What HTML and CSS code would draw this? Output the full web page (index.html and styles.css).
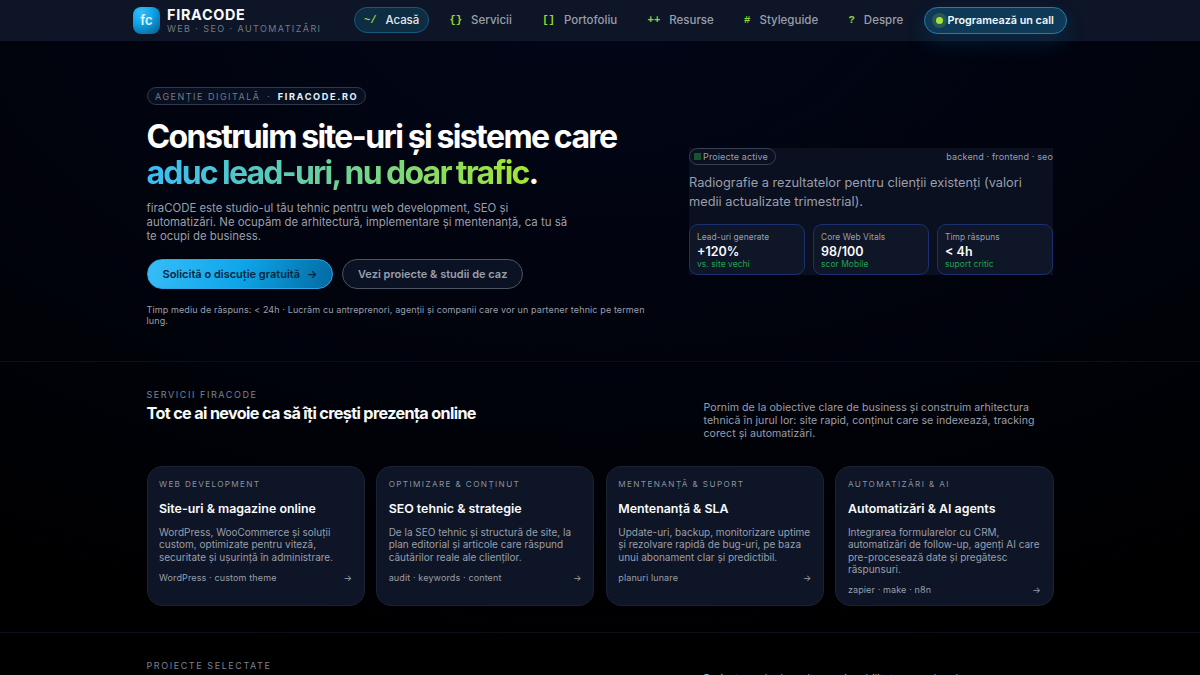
FILE: index.html
```html
<!DOCTYPE html>
<html lang="ro">
<head>
<meta charset="utf-8">
<title>firaCODE</title>
<link rel="stylesheet" href="styles.css">
</head>
<body>
<header class="topbar">
  <a class="brand">
    <span class="logo">fc</span>
    <span class="brand-text"><b class="brand-name">FIRACODE</b><span class="brand-sub">WEB · SEO · AUTOMATIZĂRI</span></span>
  </a>
  <nav class="nav">
    <a class="nav-item active"><i>~/</i><span>Acasă</span></a>
    <a class="nav-item"><i>{}</i><span>Servicii</span></a>
    <a class="nav-item"><i>[]</i><span>Portofoliu</span></a>
    <a class="nav-item"><i>++</i><span>Resurse</span></a>
    <a class="nav-item"><i>#</i><span>Styleguide</span></a>
    <a class="nav-item"><i>?</i><span>Despre</span></a>
  </nav>
  <a class="call"><span class="dot"></span><span>Programează un call</span></a>
</header>
<main>
<section class="hero">
  <div class="hero-copy">
    <div class="pill"><span>AGENȚIE DIGITALĂ</span><span class="sep">·</span><b>FIRACODE.RO</b></div>
    <h1>Construim site-uri și sisteme care<br><span class="grad">aduc lead-uri, nu doar trafic</span>.</h1>
    <p class="lead">firaCODE este studio-ul tău tehnic pentru web development, SEO și<br>automatizări. Ne ocupăm de arhitectură, implementare și mentenanță, ca tu să<br>te ocupi de business.</p>
    <div class="actions">
      <a class="btn primary"><span>Solicită o discuție gratuită</span><span>→</span></a>
      <a class="btn ghost">Vezi proiecte &amp; studii de caz</a>
    </div>
    <p class="note">Timp mediu de răspuns: &lt; 24h · Lucrăm cu antreprenori, agenții și companii care vor un partener tehnic pe termen<br>lung.</p>
  </div>
  <div class="panel">
    <div class="panel-head"><span class="badge"><i></i><span>Proiecte active</span></span><span>backend · frontend · seo</span></div>
    <p class="panel-text">Radiografie a rezultatelor pentru clienții existenți (valori<br>medii actualizate trimestrial).</p>
    <div class="stats">
      <div class="stat"><span class="k">Lead-uri generate</span><b>+120%</b><em>vs. site vechi</em></div>
      <div class="stat"><span class="k">Core Web Vitals</span><b>98/100</b><em>scor Mobile</em></div>
      <div class="stat"><span class="k">Timp răspuns</span><b>&lt; 4h</b><em>suport critic</em></div>
    </div>
  </div>
</section>
<section class="services">
  <div class="sec-head">
    <div><div class="eyebrow">SERVICII FIRACODE</div><h2>Tot ce ai nevoie ca să îți crești prezența online</h2></div>
    <p class="sec-text">Pornim de la obiective clare de business și construim arhitectura<br>tehnică în jurul lor: site rapid, conținut care se indexează, tracking<br>corect și automatizări.</p>
  </div>
  <div class="cards">
    <article class="card"><div class="tag tight">WEB DEVELOPMENT</div><h3>Site-uri &amp; magazine online</h3><p>WordPress, WooCommerce și soluții<br>custom, optimizate pentru viteză,<br>securitate și ușurință în administrare.</p><div class="foot"><span>WordPress · custom theme</span><span>→</span></div></article>
    <article class="card"><div class="tag">OPTIMIZARE &amp; CONȚINUT</div><h3>SEO tehnic &amp; strategie</h3><p>De la SEO tehnic și structură de site, la<br>plan editorial și articole care răspund<br>căutărilor reale ale clienților.</p><div class="foot"><span>audit · keywords · content</span><span>→</span></div></article>
    <article class="card"><div class="tag">MENTENANȚĂ &amp; SUPORT</div><h3>Mentenanță &amp; SLA</h3><p>Update-uri, backup, monitorizare uptime<br>și rezolvare rapidă de bug-uri, pe baza<br>unui abonament clar și predictibil.</p><div class="foot"><span>planuri lunare</span><span>→</span></div></article>
    <article class="card"><div class="tag">AUTOMATIZĂRI &amp; AI</div><h3>Automatizări &amp; AI agents</h3><p>Integrarea formularelor cu CRM,<br>automatizări de follow-up, agenți AI care<br>pre-procesează date și pregătesc<br>răspunsuri.</p><div class="foot"><span>zapier · make · n8n</span><span>→</span></div></article>
  </div>
</section>
<section class="projects">
  <div class="sec-head"><div class="eyebrow">PROIECTE SELECTATE</div><p class="sec-text">Proiecte unde dezvoltarea și mobilitatea au rol real.</p></div>
</section>
</main>
</body>
</html>
```
FILE: styles.css
```css
* { box-sizing: border-box; }
html, body { height: 100%; }
body {
  margin: 0;
  overflow: hidden;
  font-family: Inter, "Liberation Sans", sans-serif;
  color: #9a9fab;
  white-space: nowrap;
  background: radial-gradient(ellipse 100% 100% at 50% 0, #020617 0, #01030d 50%, #000 100%);
}
p, h1, h2, h3 { margin: 0; }
i, em { font-style: normal; }
.topbar {
  height: 41px;
  padding: 0 133px;
  display: flex;
  align-items: flex-start;
  background: #0d1527;
  border-bottom: 1px solid #0f182a;
}
.brand { display: flex; gap: 7px; padding-top: 6.5px; width: 221px; }
.logo {
  width: 27px; height: 27px;
  border-radius: 8px;
  background: radial-gradient(circle at 30% 20%, #38bdf8, #0ea5e9 40%, #075985 100%);
  color: #e3f4ff;
  font-size: 13px; font-weight: 600; line-height: 27px;
  text-align: center;
}
.brand-text { display: flex; flex-direction: column; }
.brand-name { font-size: 14.4px; line-height: 15.5px; letter-spacing: .7px; font-weight: 700; color: #f9fafb; }
.brand-sub { font-size: 9px; line-height: 13px; letter-spacing: 1.41px; color: #747a87; }
.nav { display: flex; padding-top: 6.5px; gap: 10.3px; }
.nav-item {
  height: 26.5px;
  padding: 0 9px;
  display: flex;
  align-items: center;
  gap: 9px;
  border: 1px solid transparent;
  border-radius: 14px;
  font-size: 11.5px;
  font-weight: 500;
}
.nav-item i { font: bold 10.6px "Liberation Mono", monospace; color: #93d635; }
.active { background: #0e2c42; border-color: #155a7c; color: #e5e7eb; letter-spacing: -.1px; }
.call {
  margin: 6.5px 0 0 auto;
  width: 143px; height: 27px;
  display: flex; align-items: center;
  gap: 4.5px;
  padding-left: 11px;
  border: 1px solid #1f7fae;
  border-radius: 14px;
  background: #0f3a57;
  box-shadow: 0 9px 22px rgba(14,165,233,.14);
  font-size: 10.8px; font-weight: 600; color: #f0f9ff;
}
.dot { width: 7px; height: 7px; border-radius: 50%; background: #a3e635; box-shadow: 0 0 0 4px rgba(163,230,53,.18); }
.hero {
  height: 321px;
  padding: 46px 146.5px 0;
  display: flex;
  border-bottom: 1px solid #0b0f18;
}
.hero-copy { width: 542.5px; }
.pill {
  width: 219.5px; height: 18px;
  display: flex; align-items: center;
  padding-left: 7.5px;
  border: 1px solid #30394a;
  border-radius: 9px;
  background: #080f20;
  font-size: 9px; letter-spacing: 1.5px; color: #747a87;
}
.pill b { color: #e5f3ff; font-size: 9.2px; letter-spacing: 1.62px; }
.sep { margin: 0 6.5px; }
h1 { margin-top: 14px; font-size: 32px; line-height: 35.5px; font-weight: 700; letter-spacing: -1.6px; word-spacing: -.6px; color: #fff; }
.grad { letter-spacing: -1.78px; background: linear-gradient(90deg, #38bdf8, #a3e635); -webkit-background-clip: text; background-clip: text; color: transparent; }
.lead { margin-top: 10.5px; font-size: 11.4px; line-height: 14.3px; }
.actions { display: flex; gap: 9.5px; margin-top: 15.5px; }
.btn { height: 30px; border-radius: 15px; border: 1px solid; display: flex; align-items: center; padding: 0 15px; font-size: 11px; font-weight: 600; }
.primary { width: 186px; gap: 7px; color: #06263d; background: linear-gradient(110deg, #38bdf8, #0ea5e9 50%, #0369a1); border-color: #2aa8e6; }
.ghost { width: 181px; background: #0b1224; border-color: #4b5563; }
.note { margin-top: 15px; font-size: 9px; line-height: 11px; letter-spacing: .112px; }
.panel { width: 364px; height: 127px; margin-top: 60.5px; background: #0a1020; }
.panel-head { display: flex; justify-content: space-between; align-items: center; height: 17.5px; font-size: 9px; letter-spacing: .13px; }
.badge { width: 87px; height: 17.5px; display: flex; align-items: center; gap: 2px; padding-left: 4px; border: 1px solid #374151; border-radius: 9px; }
.badge i { width: 7px; height: 7px; background: #14532d; }
.panel-text { margin-top: 8px; font-size: 12.8px; line-height: 19.3px; }
.stats { display: grid; grid-template-columns: repeat(3, 1fr); gap: 8px; margin-top: 12px; }
.stat { height: 51px; border: 1px solid #1a3070; border-radius: 9px; background: #0f1627; padding: 7px; display: flex; flex-direction: column; align-items: flex-start; }
.k { font-size: 8.4px; line-height: 11px; letter-spacing: .06px; }
.stat b { font-size: 12.5px; line-height: 17px; font-weight: 600; color: #f9fafb; }
.stat em { font-size: 8.4px; line-height: 9.5px; letter-spacing: .09px; color: #22a455; }
.services { height: 271px; padding: 27px 146.5px 0; border-bottom: 1px solid #0b0f18; }
.sec-head { display: flex; justify-content: space-between; }
.eyebrow { font-size: 9px; line-height: 11px; letter-spacing: 1.58px; color: #7b828f; }
h2 { margin-top: 3px; font-size: 16.2px; line-height: 21px; font-weight: 700; letter-spacing: -.645px; color: #f9fafb; }
.sec-text { width: 350px; padding-top: 11.5px; font-size: 10.6px; line-height: 13.4px; letter-spacing: .041px; }
.cards { display: grid; grid-template-columns: repeat(4, minmax(0, 1fr)); gap: 11.5px; margin-top: 25px; }
.card { height: 140px; padding: 12px 11.5px; border: 1px solid #1b2333; border-radius: 15px; background: #0e1526; }
.tag { font-size: 8.2px; line-height: 11px; letter-spacing: 1.37px; color: #8a919e; }
.tight { letter-spacing: 1.31px; }
h3 { margin-top: 10.5px; font-size: 12.4px; line-height: 17px; font-weight: 600; color: #f9fafb; }
.card p { margin-top: 8.5px; font-size: 10px; line-height: 12.5px; }
.foot { display: flex; justify-content: space-between; margin-top: 8.3px; font-size: 9px; line-height: 11px; letter-spacing: .13px; }
.projects { padding: 27px 146.5px 0; }
```
